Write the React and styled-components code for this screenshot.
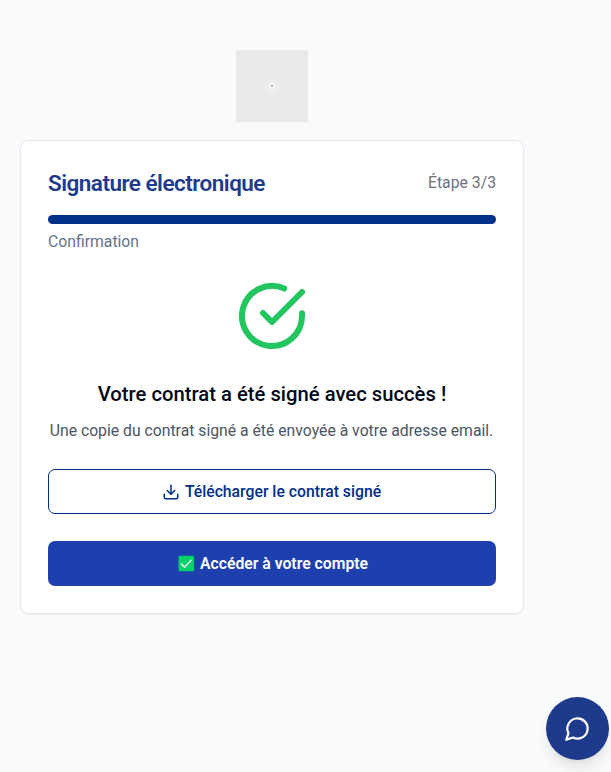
import React from 'react';
import styled, { createGlobalStyle } from 'styled-components';

const GlobalStyle = createGlobalStyle`
  * { box-sizing: border-box; }
  html { font-size: 18px; }
  body {
    margin: 0;
    background: #f9fafc;
    font-family: Roboto, sans-serif;
    overflow: hidden;
  }
  h1, h2, p { margin: 0; }
  button { font-family: inherit; cursor: pointer; }
`;

const Page = styled.main`
  min-height: 100vh;
  padding: 50px 20px 0;
`;

const Column = styled.div`
  width: 28rem;
  display: flex;
  flex-direction: column;
  align-items: center;
  gap: 1rem;
`;

const LogoTile = styled.div`
  width: 4rem;
  height: 4rem;
  display: grid;
  place-items: center;
  background: #e9e9e9;
`;

const Card = styled.section`
  width: 100%;
  height: 474px;
  padding: 27px;
  background: #fff;
  border: 1px solid #e2e8f0;
  border-radius: 9px;
  box-shadow: 0 1px 2px rgba(0, 0, 0, 0.05);
`;

const Header = styled.header`
  height: 29px;
  display: flex;
  align-items: center;
  justify-content: space-between;
`;

const Title = styled.h1`
  padding-top: 2px;
  font-size: 22.5px;
  font-weight: 600;
  line-height: 29px;
  letter-spacing: -0.52px;
  color: #1e3a8a;
`;

const Step = styled.span`
  font-size: 15.75px;
  line-height: 22px;
  color: #6b7280;
`;

const Progress = styled.div`
  height: 9px;
  margin-top: 18px;
  border-radius: 9px;
  background: #003087;
`;

const StageName = styled.p`
  margin-top: 7px;
  font-size: 15.75px;
  line-height: 22px;
  color: #64748b;
`;

const Success = styled.div`
  margin-top: 27px;
  display: flex;
  flex-direction: column;
  align-items: center;
`;

const Heading = styled.h2`
  margin-top: 28px;
  font-size: 20.25px;
  font-weight: 500;
  line-height: 28px;
  color: #020817;
  white-space: nowrap;
`;

const Message = styled.p`
  margin-top: 9px;
  padding-right: 1px;
  font-size: 15.75px;
  line-height: 27px;
  color: #4b5563;
  white-space: nowrap;
`;

const Actions = styled.div`
  margin-top: 25px;
  display: flex;
  flex-direction: column;
  gap: 27px;
`;

const Button = styled.button`
  height: 45px;
  display: flex;
  align-items: center;
  justify-content: center;
  gap: 5px;
  padding: ${({ $primary }) => ($primary ? '0 0 0 2px' : '0 1px 0 0')};
  border: ${({ $primary }) => ($primary ? '0' : '1px solid #003087')};
  border-radius: 7px;
  background: ${({ $primary }) => ($primary ? '#1e40af' : '#fff')};
  color: ${({ $primary }) => ($primary ? '#fff' : '#003087')};
  font-size: 15.75px;
  font-weight: ${({ $primary }) => ($primary ? 600 : 500)};
`;

const ChatButton = styled.button`
  position: fixed;
  right: 2px;
  bottom: 12px;
  width: 63px;
  height: 63px;
  display: grid;
  place-items: center;
  padding: 0;
  border: 0;
  border-radius: 50%;
  background: #1e3a8a;
  color: #fff;
  box-shadow: 0 10px 15px -3px rgba(0, 0, 0, 0.1), 0 4px 6px -4px rgba(0, 0, 0, 0.1);
`;

const Icon = ({ size, color = 'currentColor', children }) => (
  <svg
    width={size}
    height={size}
    viewBox="0 0 24 24"
    fill="none"
    stroke={color}
    strokeWidth="2"
    strokeLinecap="round"
    strokeLinejoin="round"
    aria-hidden="true"
  >
    {children}
  </svg>
);

const LogoMark = () => (
  <svg width="20" height="20" viewBox="0 0 20 20" aria-hidden="true">
    <circle cx="10" cy="10" r="8" fill="#ededed" />
    <circle cx="10" cy="10" r="3" fill="#f6f6f6" />
    <rect x="9" y="9" width="2" height="2" fill="#b5b5b5" />
  </svg>
);

const CheckBadge = () => (
  <svg width="17" height="17" viewBox="0 0 17 17" aria-hidden="true">
    <rect x="0.5" y="0.7" width="15.6" height="15.6" rx="1.5" fill="#00d26a" />
    <path
      d="M3.5 9.1 6.6 12.1 13.1 5.2"
      fill="none"
      stroke="#f4f4f4"
      strokeWidth="1.5"
      strokeLinecap="round"
      strokeLinejoin="round"
    />
  </svg>
);

export default function App() {
  return (
    <>
      <GlobalStyle />
      <Page>
        <Column>
          <LogoTile>
            <LogoMark />
          </LogoTile>
          <Card>
            <Header>
              <Title>Signature électronique</Title>
              <Step>Étape 3/3</Step>
            </Header>
            <Progress />
            <StageName>Confirmation</StageName>
            <Success>
              <Icon size={72} color="#22c55e">
                <path d="M22 11.08V12a10 10 0 1 1-5.93-9.14" />
                <path d="m9 11 3 3L22 4" />
              </Icon>
              <Heading>Votre contrat a été signé avec succès !</Heading>
              <Message>Une copie du contrat signé a été envoyée à votre adresse email.</Message>
            </Success>
            <Actions>
              <Button>
                <Icon size={18}>
                  <path d="M21 15v4a2 2 0 0 1-2 2H5a2 2 0 0 1-2-2v-4" />
                  <path d="m7 10 5 5 5-5" />
                  <path d="M12 15V3" />
                </Icon>
                Télécharger le contrat signé
              </Button>
              <Button $primary>
                <CheckBadge />
                Accéder à votre compte
              </Button>
            </Actions>
          </Card>
        </Column>
      </Page>
      <ChatButton aria-label="Chat">
        <Icon size={27}>
          <path d="M7.9 20A9 9 0 1 0 4 16.1L2 22Z" />
        </Icon>
      </ChatButton>
    </>
  );
}
